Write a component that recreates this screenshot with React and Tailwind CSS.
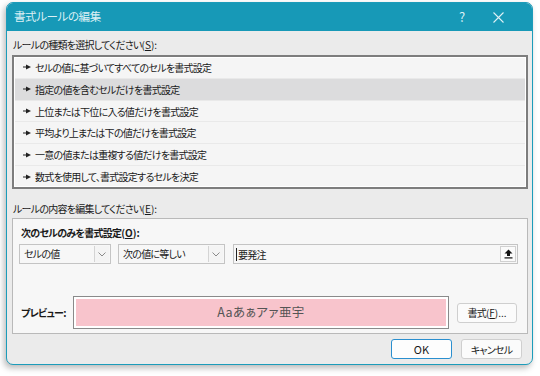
import React from "react";

const F = { fontFamily: '"Noto Sans CJK JP", "Noto Sans", sans-serif' };

function Pin() {
  return (
    <svg width="8" height="6" viewBox="0 0 8 6" className="shrink-0">
      <rect x="0" y="2.5" width="4" height="1" fill="#222" />
      <polygon points="3,0.5 8,3 3,5.5" fill="#222" />
    </svg>
  );
}

function Chevron() {
  return (
    <svg width="8" height="5" viewBox="0 0 8 5">
      <polyline points="0.5,0.5 4,4 7.5,0.5" fill="none" stroke="#8a8a8a" strokeWidth="1" />
    </svg>
  );
}

const rows = [
  "セルの値に基づいてすべてのセルを書式設定",
  "指定の値を含むセルだけを書式設定",
  "上位または下位に入る値だけを書式設定",
  "平均より上または下の値だけを書式設定",
  "一意の値または重複する値だけを書式設定",
  "数式を使用して、書式設定するセルを決定",
];

const T = "text-[10px] tracking-[-0.75px]";

function Acc({ k, tail = "):" }) {
  return (
    <span className="tracking-[0px]">
      (<span className="underline">{k}</span>{tail}
    </span>
  );
}

function Select({ w, text }) {
  return (
    <div className={`${w} h-[20px] border border-[#c4c4c4] bg-[#f7f7f7] flex items-stretch`}>
      <div className={`flex-1 pl-[4px] flex items-center ${T} text-[#222] leading-none whitespace-nowrap`}>{text}</div>
      <div className="w-[15px] my-[1px] mr-[1px] border-l border-[#d4d4d4] bg-[#f4f4f4] flex items-center justify-center">
        <Chevron />
      </div>
    </div>
  );
}

export default function App() {
  return (
    <div className="w-[540px] h-[376px] bg-white overflow-hidden [font-feature-settings:'palt']" style={F}>
      <div className="ml-[6px] mt-[2px] w-[527px] h-[363px] rounded-[7px] border border-[#1c9cba] bg-[#ebebeb] overflow-hidden shadow-[-2px_3px_6px_rgba(0,0,0,0.28)] flex flex-col">
        <div className="h-[28px] bg-[#1799b7] flex items-center pl-[7px] text-[11.5px] tracking-[-0.4px] text-[#dcf0f5] shrink-0">
          <span className="flex-1">書式ルールの編集</span>
          <span className="w-[20px] text-center text-[13px] mr-[21px]">?</span>
          <svg width="11" height="11" viewBox="0 0 11 11" className="mr-[28px]">
            <path d="M0.5 0.5 L10.5 10.5 M10.5 0.5 L0.5 10.5" stroke="#dcf0f5" strokeWidth="1.1" />
          </svg>
        </div>
        <div className="flex-1 pl-[5px] pr-[4px] pt-[6px] flex flex-col text-[#1a1a1a]">
          <div className={`h-[16px] leading-[16px] ${T} pl-[1px]`}>
            ルールの種類を選択してください<Acc k="S" />
          </div>
          <div className="mt-[2px] h-[134px] border-2 border-[#7d7d7d] bg-[#f5f5f5] shadow-[inset_0_0_0_1px_#ffffff] flex flex-col">
            {rows.map((r, i) => (
              <div
                key={i}
                className={`flex-1 flex items-center gap-[4px] pl-[8px] mx-[1px] ${T} ${i === 1 ? "bg-[#dcdcdd]" : ""} ${i < 5 ? "border-b border-[#e9e9e9]" : ""}`}
              >
                <Pin />
                <span>{r}</span>
              </div>
            ))}
          </div>
          <div className={`mt-[12px] h-[16px] leading-[16px] ${T} pl-[1px]`}>
            ルールの内容を編集してください<Acc k="E" />
          </div>
          <div className="mt-[1px] h-[116px] border border-[#b9b9b9] bg-[#f7f7f7] pt-[6px] pl-[6px] pr-[9px] flex flex-col">
            <div className={`h-[16px] leading-[16px] ${T} font-bold pl-[2px]`}>
              次のセルのみを書式設定<Acc k="O" />
            </div>
            <div className="mt-[3px] flex items-center">
              <Select w="w-[92px]" text="セルの値" />
              <div className="w-[7px]" />
              <Select w="w-[107px]" text="次の値に等しい" />
              <div className="w-[8px]" />
              <div className="flex-1 h-[20px] border border-[#c4c4c4] bg-[#f7f7f7] flex items-stretch">
                <div className={`flex-1 flex items-center pl-[2px] ${T}`}>
                  <span className="w-[1px] h-[13px] bg-[#222] mr-[1px]" />
                  要発注
                </div>
                <div className="w-[16px] m-[1px] border border-[#d0d0d0] bg-[#fafafa] flex items-center justify-center">
                  <svg width="9" height="10" viewBox="0 0 9 10">
                    <polygon points="4.5,0.5 8.5,4.5 6,4.5 6,7 3,7 3,4.5 0.5,4.5" fill="#111" />
                    <rect x="0.5" y="8.3" width="8" height="1.2" fill="#111" />
                  </svg>
                </div>
              </div>
            </div>
            <div className="mt-[32px] flex items-center">
              <div className={`w-[54px] pl-[2px] ${T} font-bold whitespace-nowrap`}>プレビュー:</div>
              <div className="w-[376px] h-[33px] border border-[#8a8a8a] bg-[#f8c4cc] shadow-[inset_0_0_0_2px_#ffffff] flex items-center justify-center text-[12.5px] text-[#555] tracking-[0.4px]">
                Aaあぁアァ亜宇
              </div>
              <div className={`ml-[8px] w-[60px] h-[20px] rounded-[3px] border border-[#cfcfcf] bg-[#fbfbfb] flex items-center justify-center ${T}`}>
                書式<Acc k="F" tail=")..." />
              </div>
            </div>
          </div>
          <div className="mt-[5px] flex justify-end pr-[6px] gap-[9px]">
            <div className="w-[61px] h-[20px] rounded-[3px] border border-[#2a8fcf] bg-[#fdfdfd] flex items-center justify-center text-[11px]">
              OK
            </div>
            <div className={`w-[61px] h-[20px] rounded-[3px] border border-[#cfcfcf] bg-[#fbfbfb] flex items-center justify-center ${T}`}>
              キャンセル
            </div>
          </div>
        </div>
      </div>
    </div>
  );
}
